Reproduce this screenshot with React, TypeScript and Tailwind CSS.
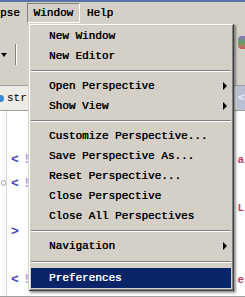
import React from "react";

type Item = { label: string; sub?: boolean; active?: boolean } | "sep";

const items: Item[] = [
  { label: "New Window" },
  { label: "New Editor" },
  "sep",
  { label: "Open Perspective", sub: true },
  { label: "Show View", sub: true },
  "sep",
  { label: "Customize Perspective..." },
  { label: "Save Perspective As..." },
  { label: "Reset Perspective..." },
  { label: "Close Perspective" },
  { label: "Close All Perspectives" },
  "sep",
  { label: "Navigation", sub: true },
  "sep",
  { label: "Preferences", active: true },
];

function WindowMenu() {
  return (
    <div className="absolute left-[28px] top-[23px] w-[206px] bg-[#d4d0c8] p-[3px] shadow-[inset_1px_1px_0_#d4d0c8,inset_-1px_-1px_0_#404040,inset_2px_2px_0_#ffffff,inset_-2px_-2px_0_#808080,2px_2px_2px_rgba(0,0,0,0.4)]">
      {items.map((it, i) =>
        it === "sep" ? (
          <div key={i} className={`flex items-center ${i === 13 ? "h-[12px]" : "h-[10px]"}`}>
            <div className="h-[2px] w-full border-t border-[#808080] border-b border-b-white" />
          </div>
        ) : (
          <div
            key={i}
            className={`flex h-[20px] items-center justify-between pl-[18px] pr-[4px] ${
              it.active ? "bg-[#0a246a] text-white" : "text-black"
            }`}
          >
            <span className="[text-shadow:0.35px_0_0_currentColor]">{it.label}</span>
            {it.sub && (
              <span className="h-0 w-0 border-y-[4px] border-l-[4px] border-y-transparent border-l-black" />
            )}
          </div>
        )
      )}
    </div>
  );
}

export default function App() {
  return (
    <div className="relative flex h-[297px] w-[245px] flex-col overflow-hidden bg-white font-['Liberation_Mono',monospace] text-[11px] text-black">
      <div className="h-[2px] bg-[#5b6fa8]" />

      {/* menu bar */}
      <div className="flex h-[22px] items-center gap-[7px] bg-[#d4d0c8] [text-shadow:0.35px_0_0_currentColor]">
        <span>pse</span>
        <div className="flex h-[20px] w-[53px] items-center justify-center border border-t-[#808080] border-l-[#808080] border-r-white border-b-white">
          Window
        </div>
        <span>Help</span>
      </div>

      {/* toolbar */}
      <div className="flex h-[61px] items-center justify-between bg-[#d4d0c8]">
        <div className="flex items-center gap-[8px]">
          <span className="ml-[1px] h-0 w-0 border-x-[3px] border-t-[4px] border-x-transparent border-t-black" />
          <div className="h-[21px] w-[2px] border-l border-[#808080] bg-white" />
        </div>
        <div className="mt-[12px] flex h-[13px] w-[7px] items-center self-start">
          <div className="h-full w-full rounded-l-sm bg-gradient-to-b from-[#8a6fc0] via-[#5aa060] to-[#d05060]" />
        </div>
      </div>

      {/* tab row */}
      <div className="flex h-[26px] items-center justify-between border-y border-[#a0a0a0] bg-[#ecebe6]">
        <div className="flex items-center gap-[3px]">
          <span className="-ml-[3px] h-[7px] w-[7px] rounded-full bg-[#3a8ad8]" />
          <span>str</span>
        </div>
        <div className="flex h-full w-[8px] items-center justify-center bg-[#b9c0d6] font-bold text-[#e8ecf6]">
          &lt;
        </div>
      </div>

      {/* editor */}
      <div className="flex flex-1 border-b border-[#a0a0a0]">
        <div className="w-[7px] border-r border-[#d8d8d8] pt-[36px]">
          <div className="h-[24px]" />
          <div className="flex h-[24px] items-center">
            <span className="ml-[1px] h-[6px] w-[6px] rounded-full border border-[#9aa0b0]" />
          </div>
        </div>
        <div className="flex flex-1 flex-col pt-[37px] font-bold">
          {["<!", "<!", "", ">", "", "<!"].map((t, i) => (
            <div key={i} className="flex h-[24px] items-center justify-between pl-[4px]">
              <span className="text-[13px] text-[#3f3fbf]">
                {t[0]}
                <span className="ml-[4px] text-[#b8a0e0]">{t[1]}</span>
              </span>
              <span className="mr-[1px] text-[#c04060]">{["a", "", "L", "", "", "e"][i]}</span>
            </div>
          ))}
        </div>
      </div>

      <WindowMenu />
    </div>
  );
}
